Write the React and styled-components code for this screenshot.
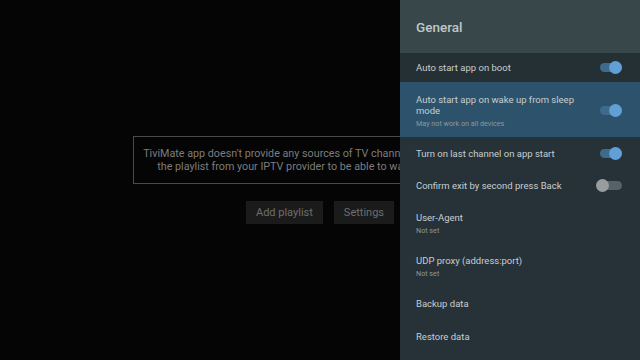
import React from 'react'
import styled, { createGlobalStyle } from 'styled-components'

const GlobalStyle = createGlobalStyle`
  html, body {
    margin: 0;
    padding: 0;
    background: #050505;
  }
  body {
    font-family: Roboto, "Noto Sans", sans-serif;
  }
`

const Screen = styled.div`
  position: relative;
  width: 640px;
  height: 360px;
  overflow: hidden;
  background: #050505;
`

const Empty = styled.div`
  height: 100%;
  display: flex;
  flex-direction: column;
  align-items: center;
  justify-content: center;
  gap: 17px;
`

const MessageBox = styled.div`
  width: 372px;
  height: 46px;
  border: 1px solid #4a4a4a;
  display: flex;
  align-items: center;
  justify-content: center;
  text-align: center;
  white-space: nowrap;
  color: #7c7c7c;
  font-size: 10.75px;
  line-height: 13px;
`

const Buttons = styled.div`
  display: flex;
  gap: 11px;
`

const Button = styled.div`
  height: 23px;
  padding: 0 10px;
  display: flex;
  align-items: center;
  background: #1b1b1b;
  color: #6e6e6e;
  font-size: 11px;
`

// settings drawer slides over the empty state
const Drawer = styled.aside`
  position: absolute;
  top: 0;
  right: 0;
  width: 240px;
  height: 360px;
  background: #263238;
  display: flex;
  flex-direction: column;
`

const Header = styled.div`
  height: 53px;
  flex: none;
  background: #37474a;
  display: flex;
  align-items: center;
  padding-left: 16px;
  color: #bfc7c9;
  font-size: 13.5px;
  font-weight: 500;
`

const Row = styled.div`
  display: flex;
  align-items: center;
  gap: 10px;
  padding: ${p => p.$pt || '8px'} 18px ${p => p.$pb || '8px'} 16px;
  background: ${p => (p.$focused ? '#2d536c' : p.$dim ? '#253035' : 'transparent')};
`

const RowText = styled.div`
  flex: 1;
  min-width: 0;
`

const Title = styled.div`
  color: #c6ced0;
  font-size: 9.5px;
  line-height: 11px;
  padding: 2px 0;
`

const Subtitle = styled.div`
  color: #8d979a;
  font-size: 7.2px;
  line-height: 11px;
`

const Switch = styled.div`
  position: relative;
  flex: none;
  width: 22px;
  height: 9px;
  border-radius: 5px;
  background: ${p => (p.$on ? '#3e6a8c' : '#56616a')};

  &::after {
    content: '';
    position: absolute;
    top: -2px;
    left: ${p => (p.$on ? '9px' : '-4px')};
    width: 13px;
    height: 13px;
    border-radius: 50%;
    background: ${p => (p.$on ? '#619fd6' : '#9a9d9e')};
  }
`

const settings = [
  { title: 'Auto start app on boot', toggle: true, dim: true, pt: '7px', pb: '7px' },
  {
    title: 'Auto start app on wake up from sleep mode',
    sub: 'May not work on all devices',
    toggle: true,
    focused: true,
    pt: '10px',
    pb: '8px',
  },
  { title: 'Turn on last channel on app start', toggle: true, pt: '9px', pb: '9px' },
  { title: 'Confirm exit by second press Back', toggle: false },
  { title: 'User-Agent', sub: 'Not set', pt: '9px', pb: '8px' },
  { title: 'UDP proxy (address:port)', sub: 'Not set', pt: '9px', pb: '8px' },
  { title: 'Backup data', pt: '9px', pb: '9px' },
  { title: 'Restore data', pt: '9px', pb: '9px' },
]

export default function App() {
  return (
    <>
      <GlobalStyle />
      <Screen>
        <Empty>
          <MessageBox>
            TiviMate app doesn't provide any sources of TV channels. You need to add
            <br />
            the playlist from your IPTV provider to be able to watch TV channels.
          </MessageBox>
          <Buttons>
            <Button>Add playlist</Button>
            <Button>Settings</Button>
          </Buttons>
        </Empty>

        <Drawer>
          <Header>General</Header>
          {settings.map(s => (
            <Row key={s.title} $focused={s.focused} $dim={s.dim} $pt={s.pt} $pb={s.pb}>
              <RowText>
                <Title>{s.title}</Title>
                {s.sub && <Subtitle>{s.sub}</Subtitle>}
              </RowText>
              {s.toggle !== undefined && <Switch $on={s.toggle} />}
            </Row>
          ))}
        </Drawer>
      </Screen>
    </>
  )
}
